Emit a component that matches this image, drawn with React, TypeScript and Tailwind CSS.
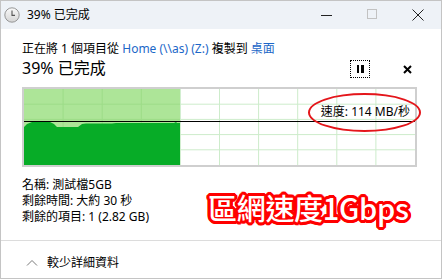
import React from "react";

const font = "font-['Noto_Sans','Noto_Sans_CJK_TC',sans-serif]";

function ClockIcon() {
  return (
    <svg width="16" height="16" viewBox="0 0 16 16">
      <defs>
        <linearGradient id="cg" x1="0" y1="0" x2="0" y2="1">
          <stop offset="0" stopColor="#fafafa" />
          <stop offset="1" stopColor="#d4d4d4" />
        </linearGradient>
      </defs>
      <circle cx="8" cy="8" r="7.2" fill="url(#cg)" stroke="#8c8c8c" strokeWidth="0.9" />
      <path d="M8 3.6 V8.4 H11" fill="none" stroke="#555" strokeWidth="1.1" />
    </svg>
  );
}

function Chart() {
  const W = 391;
  const H = 76;
  const cols = 10;
  const rows = 5;
  const cw = W / cols;
  const rh = H / rows;
  const split = 156;
  const vx = Array.from({ length: cols - 1 }, (_, i) => (i + 1) * cw);
  const hy = Array.from({ length: rows - 1 }, (_, i) => (i + 1) * rh);
  const pts =
    "0,38 3,35 8,33 26,33 30,35 33,38 54,38 58,35 62,34.5 88,34.5 92,34 150,34 152,33 153,34 156,34 156,76 0,76";
  return (
    <svg width="100%" height={H} viewBox={`0 0 ${W} ${H}`} preserveAspectRatio="none" className="block">
      <rect x="0" y="0" width={W} height={H} fill="#ffffff" />
      {vx.map((x) => (
        <line key={"v" + x} x1={x} y1={0} x2={x} y2={H} stroke="#cdeccb" strokeWidth="1" />
      ))}
      {hy.map((y) => (
        <line key={"h" + y} x1={0} y1={y} x2={W} y2={y} stroke="#cdeccb" strokeWidth="1" />
      ))}
      <rect x="0" y="0" width={split} height={H} fill="#ade598" />
      {vx
        .filter((x) => x < split)
        .map((x) => (
          <line key={"dv" + x} x1={x} y1={0} x2={x} y2={H} stroke="#9ddc88" strokeWidth="1" />
        ))}
      {hy.map((y) => (
        <line key={"dh" + y} x1={0} y1={y} x2={split} y2={y} stroke="#9ddc88" strokeWidth="1" />
      ))}
      <polygon points={pts} fill="#07ac27" />
      <line x1="0" y1="32.5" x2={W} y2="32.5" stroke="#000" strokeWidth="1" />
    </svg>
  );
}

export default function App() {
  return (
    <div className={`${font} w-[442px] h-[279px] border border-[#c4c4c4] bg-white flex flex-col text-[12px] text-black overflow-hidden`}>
      {/* Title bar */}
      <div className="h-[28px] bg-[#eef2f7] flex items-center shrink-0">
        <div className="ml-[3px] flex items-center">
          <ClockIcon />
        </div>
        <span className="ml-[7px] text-[12px] leading-none">39% 已完成</span>
        <div className="ml-auto flex items-center h-full">
          <div className="w-[46px] h-full flex items-center justify-center">
            <div className="w-[11px] h-[1px] bg-[#222]" />
          </div>
          <div className="w-[46px] h-full flex items-center justify-center">
            <div className="w-[10px] h-[10px] border border-[#c2c2c2] -mt-[2px]" />
          </div>
          <div className="w-[46px] h-full flex items-center justify-center">
            <svg width="12" height="12" viewBox="0 0 12 12">
              <path d="M0.5 0.5 L11.5 11.5 M11.5 0.5 L0.5 11.5" stroke="#222" strokeWidth="1" />
            </svg>
          </div>
        </div>
      </div>

      {/* Body */}
      <div className="flex-1 pl-[21px] pr-[24px] pt-[12px] relative">
        <div className="leading-[16px] whitespace-nowrap">
          正在將 1 個項目從 <span className="text-[#1c67c8]">Home (\\as) (Z:)</span> 複製到{" "}
          <span className="text-[#1c67c8]">桌面</span>
        </div>
        <div className="flex items-center h-[22px]">
          <span className="text-[16px] leading-[22px]">39% 已完成</span>
          <div className="ml-auto flex items-center">
            <div className="w-[20px] h-[18px] border border-dotted border-black flex items-center justify-center gap-[2px] mt-[2px]">
              <div className="w-[2.5px] h-[8px] bg-black" />
              <div className="w-[2.5px] h-[8px] bg-black" />
            </div>
            <div className="w-[20px] ml-[27px] flex items-center justify-center mt-[2px]">
              <svg width="9" height="9" viewBox="0 0 9 9">
                <path d="M1 1 L8 8 M8 1 L1 8" stroke="#000" strokeWidth="2" />
              </svg>
            </div>
          </div>
        </div>

        <div className="mt-[8px] border-2 border-[#cfcfcf] relative">
          <Chart />
          <div className="absolute right-[5px] top-[15px] leading-[16px] whitespace-nowrap">
            速度: 114 MB/秒
          </div>
          <div className="absolute left-[284px] top-[4px] w-[113px] h-[39px] border-2 border-[#e4161b] rounded-[50%]" />
        </div>

        <div className="mt-[10px] leading-[16px]">
          <div>名稱: 測試檔5GB</div>
          <div>剩餘時間: 大約 30 秒</div>
          <div>剩餘的項目: 1 (2.82 GB)</div>
        </div>

        <div className="absolute left-[207px] top-[161px] text-[29px] leading-[34px] font-medium tracking-[-0.3px] text-white whitespace-nowrap font-['Noto_Sans_CJK_TC','Noto_Sans',sans-serif] [text-shadow:2px_0_#f00,-2px_0_#f00,0_2px_#f00,0_-2px_#f00,2px_2px_#f00,-2px_-2px_#f00,2px_-2px_#f00,-2px_2px_#f00,3px_0_#f00,-3px_0_#f00,0_3px_#f00,0_-3px_#f00,3px_1px_#f00,-3px_1px_#f00,1px_3px_#f00,1px_-3px_#f00,3px_-1px_#f00,-3px_-1px_#f00,-1px_3px_#f00,-1px_-3px_#f00]">
          區網速度1Gbps
        </div>
      </div>

      {/* Footer */}
      <div className="h-[38px] border-t border-[#dcdcdc] flex items-center pt-[6px] shrink-0">
        <svg width="12" height="8" viewBox="0 0 12 8" className="ml-[25px]">
          <path d="M1 6.5 L6 1.5 L11 6.5" fill="none" stroke="#7a7a7a" strokeWidth="1" />
        </svg>
        <span className="ml-[9px] leading-none">較少詳細資料</span>
      </div>
    </div>
  );
}
